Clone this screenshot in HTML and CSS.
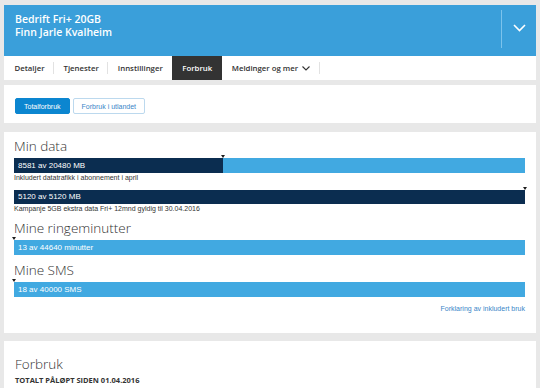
FILE: index.html
```html
<!DOCTYPE html>
<html lang="no">
<head>
  <meta charset="UTF-8" />
  <title>Forbruk</title>
  <link rel="stylesheet" href="styles.css">
</head>
<body>
  <div class="page">
    <header class="sub-header">
      <div class="sub-title">
        <div>Bedrift Fri+ 20GB</div>
        <div>Finn Jarle Kvalheim</div>
      </div>
      <button class="sub-toggle" aria-label="Velg abonnement">
        <svg width="13" height="8" viewBox="0 0 13 8"><path d="M1 1 L6.5 6.5 L12 1" fill="none" stroke="#fff" stroke-width="1.6"/></svg>
      </button>
    </header>

    <nav class="tabs">
      <a class="tab">Detaljer</a>
      <a class="tab">Tjenester</a>
      <a class="tab">Innstillinger</a>
      <a class="tab active">Forbruk</a>
      <a class="tab">Meldinger og mer
        <svg width="8" height="5" viewBox="0 0 8 5"><path d="M0.5 0.5 L4 4 L7.5 0.5" fill="none" stroke="#333" stroke-width="1.1"/></svg>
      </a>
    </nav>

    <section class="card filter">
      <button class="btn primary">Totalforbruk</button>
      <button class="btn outline">Forbruk i utlandet</button>
    </section>

    <section class="card usage">
      <h2>Min data</h2>
      <div class="bar">
        <div class="fill" style="width: 40.9%"></div>
        <span class="marker" style="left: 40.9%"></span>
        <span class="label">8581 av 20480 MB</span>
      </div>
      <p class="note">Inkludert datatrafikk i abonnement i april</p>

      <div class="bar second">
        <div class="fill" style="width: 100%"></div>
        <span class="marker" style="left: 100%"></span>
        <span class="label">5120 av 5120 MB</span>
      </div>
      <p class="note">Kampanje 5GB ekstra data Fri+ 12mnd gyldig til 30.04.2016</p>

      <h2>Mine ringeminutter</h2>
      <div class="bar">
        <div class="fill" style="width: 0%"></div>
        <span class="marker" style="left: 0%"></span>
        <span class="label">13 av 44640 minutter</span>
      </div>

      <h2>Mine SMS</h2>
      <div class="bar">
        <div class="fill" style="width: 0%"></div>
        <span class="marker" style="left: 0%"></span>
        <span class="label">18 av 40000 SMS</span>
      </div>

      <div class="explain"><a>Forklaring av inkludert bruk</a></div>
    </section>

    <section class="card total">
      <h2>Forbruk</h2>
      <div class="since">TOTALT PÅLØPT SIDEN 01.04.2016</div>
    </section>
  </div>
</body>
</html>
```

FILE: styles.css
```css
:root {
  --blue: #3a9fda;
  --bar-light: #41a9e1;
  --bar-dark: #0b2d50;
  --text: #333333;
}

body {
  margin: 0;
  background: #e8e8e8;
  font-family: "Open Sans", Arial, sans-serif;
  color: var(--text);
  height: 388px;
  overflow: hidden;
}

.page {
  margin: 5px 4px 0;
}

.sub-header {
  background: var(--blue);
  height: 51px;
  display: flex;
  justify-content: space-between;
  align-items: stretch;
}

.sub-title {
  color: #fff;
  font-size: 10.5px;
  font-weight: 600;
  line-height: 13px;
  padding: 8px 0 0 11px;
}

.sub-toggle {
  background: transparent;
  border: none;
  border-left: 1px solid #7cc3ec;
  margin: 5px 0 8px;
  width: 35px;
  padding: 0 0 2px;
  display: flex;
  align-items: center;
  justify-content: center;
}

.tabs {
  background: #fff;
  height: 24px;
  display: flex;
  align-items: stretch;
  font-size: 7.8px;
  font-weight: 600;
  padding-left: 1px;
}

.tab {
  display: flex;
  align-items: center;
  gap: 4px;
  padding: 0 9.5px;
  position: relative;
  color: #333;
}

.tab::after {
  content: "";
  position: absolute;
  right: 0;
  top: 6px;
  bottom: 6px;
  border-right: 1px solid #e2e2e2;
}

.tab.active {
  background: #333;
  color: #fff;
  padding: 0 10px;
}

.tab.active::after,
.tabs .tab:nth-child(3)::after {
  display: none;
}

.card {
  background: #fff;
}

.filter {
  margin-top: 5px;
  height: 38px;
  box-sizing: border-box;
  padding: 13px 10px 0 11px;
  display: flex;
  gap: 3px;
  align-items: flex-start;
}

.btn {
  font-family: "Liberation Sans", Arial, sans-serif;
  font-size: 7px;
  height: 16px;
  padding: 0 8px;
  border-radius: 2px;
  white-space: nowrap;
}

.btn.primary {
  background: #0c86d0;
  color: #fff;
  border: 1px solid #0c86d0;
}

.btn.outline {
  background: #fff;
  color: #3a86c8;
  border: 1px solid #bcd9ee;
}

.usage {
  margin-top: 9px;
  height: 201px;
  box-sizing: border-box;
  padding: 4px 11px 0 10px;
}

.usage h2,
.total h2 {
  font-size: 13.5px;
  font-weight: 300;
  margin: 0;
  line-height: 20px;
  color: #333;
}

.bar {
  position: relative;
  height: 15px;
  background: var(--bar-light);
  margin-top: 2px;
  display: flex;
  align-items: center;
  font-family: "Liberation Sans", Arial, sans-serif;
}

.bar.second {
  margin-top: 8px;
  height: 14px;
}

.fill {
  position: absolute;
  left: 0;
  top: 0;
  bottom: 0;
  background: var(--bar-dark);
}

.marker {
  position: absolute;
  top: -3px;
  margin-left: -2px;
  border-left: 2.5px solid transparent;
  border-right: 2.5px solid transparent;
  border-top: 3px solid #1d1d1d;
}

.label {
  position: relative;
  color: #fff;
  font-size: 8px;
  line-height: 10px;
  padding-left: 4px;
}

.note {
  font-family: "Liberation Sans", Arial, sans-serif;
  font-size: 7px;
  margin: 0;
  line-height: 9px;
  color: #333;
}

.usage .note + h2,
.usage .bar + h2 {
  margin-top: 5px;
}

.explain {
  text-align: right;
  margin-top: 7px;
  font-family: "Liberation Sans", Arial, sans-serif;
  font-size: 7px;
  line-height: 9px;
  color: #3a86c8;
}

.total {
  margin-top: 8px;
  height: 60px;
  padding: 13px 11px 0 11px;
}

.since {
  font-size: 7.5px;
  font-weight: 700;
  margin-top: 1px;
  color: #333;
}
```
